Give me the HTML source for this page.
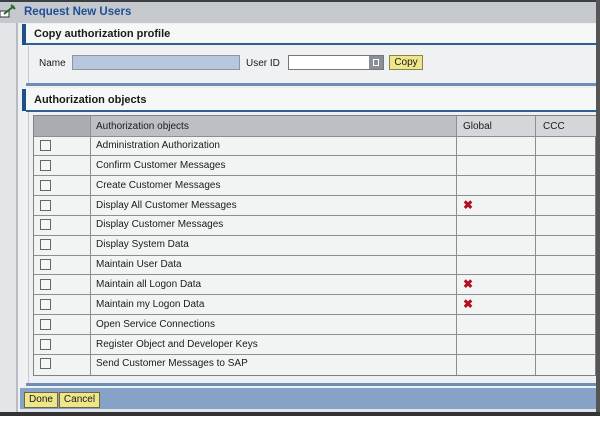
<!DOCTYPE html>
<html><head><style>
*{margin:0;padding:0;box-sizing:border-box}
body{width:600px;height:429px;background:#fff;position:relative;overflow:hidden;font-family:"Liberation Sans",Arial,sans-serif;font-size:10px;color:#1a1a1a}
.a{position:absolute}
.hl{position:absolute;left:91px;font-size:10px}
</style></head><body>
<div class="a" style="left:0;top:0;width:600px;height:416px;background:#eef0f1"></div>
<div class="a" style="left:0;top:0;width:600px;height:2px;background:#3a3f44"></div>
<div class="a" style="left:0;top:2px;width:600px;height:21px;background:#c5c9cd"></div>
<div class="a" style="left:0;top:23px;width:17px;height:390px;background:#e3e6e8"></div>
<div class="a" style="left:16px;top:23px;width:2px;height:390px;background:#b5bcc4"></div>
<div class="a" style="left:596px;top:0;width:4px;height:416px;background:#555"></div>
<div class="a" style="left:0;top:412px;width:600px;height:4px;background:#333"></div>
<svg class="a" style="left:0;top:4px" width="18" height="16"><rect x="0" y="7" width="9" height="6" fill="#fff" stroke="#333"/><path d="M4 10 L14 2" stroke="#2a6a2a" stroke-width="2"/><path d="M11 1 L15 5" stroke="#2a6a2a" stroke-width="2"/></svg>
<div class="a" style="left:24px;top:6px;font-weight:bold;font-size:11.5px;color:#1f4f98">Request New Users</div>
<div class="a" style="left:22px;top:24px;width:574px;height:21px;background:#f6f7f7"></div>
<div class="a" style="left:22px;top:24px;width:4px;height:21px;background:#1e4f88"></div>
<div class="a" style="left:34px;top:28px;font-weight:bold;font-size:11px">Copy authorization profile</div>
<div class="a" style="left:26px;top:43px;width:570px;height:2px;background:#2f5f95"></div>
<div class="a" style="left:28px;top:46px;width:568px;height:37px;background:#f0f1f2;border-left:1px solid #c4cad0"></div>
<div class="a" style="left:39px;top:58px">Name</div>
<div class="a" style="left:72px;top:55px;width:168px;height:15px;background:#b7c8de;border:1px solid #8c97a3"></div>
<div class="a" style="left:246px;top:58px">User ID</div>
<div class="a" style="left:288px;top:55px;width:96px;height:15px;background:#fff;border:1px solid #777"></div>
<div class="a" style="left:369px;top:56px;width:14px;height:13px;background:#8a9098"><div class="a" style="left:4px;top:3px;width:6px;height:7px;border:1px solid #fff"></div></div>
<div class="a" style="left:389px;top:55px;width:34px;height:15px;background:#efe58a;border:1px solid #8a8350;text-align:center;line-height:13px;font-size:10px">Copy</div>
<div class="a" style="left:26px;top:83px;width:570px;height:3px;background:#6d8fb5"></div>
<div class="a" style="left:22px;top:88px;width:574px;height:22px;background:#f6f7f7"></div>
<div class="a" style="left:22px;top:89px;width:4px;height:22px;background:#1e4f88"></div>
<div class="a" style="left:34px;top:94px;font-weight:bold;font-size:11px">Authorization objects</div>
<div class="a" style="left:26px;top:110px;width:570px;height:2px;background:#2f5f95"></div>
<div class="a" style="left:28px;top:112px;width:568px;height:272px;background:#eef0f1;border-left:1px solid #c4cad0"></div>
<div class="a" style="left:33px;top:115px;width:563px;height:261px;background:#f2f3f3;border:1px solid #7d8287"></div>
<div class="a" style="left:34px;top:116px;width:562px;height:20px;background:#a9adb1"></div>
<div class="a" style="left:90px;top:116px;width:367px;height:20px;background:#bcc0c4"></div>
<div class="a" style="left:457px;top:116px;width:139px;height:20px;background:#d4d7da"></div>
<div class="hl" style="top:121px;left:96px">Authorization objects</div>
<div class="a" style="left:463px;top:121px">Global</div>
<div class="a" style="left:543px;top:121px">CCC</div>
<div class="a" style="left:90px;top:116px;width:1px;height:259px;background:#8a8f94"></div>
<div class="a" style="left:456px;top:116px;width:1px;height:259px;background:#8a8f94"></div>
<div class="a" style="left:535px;top:116px;width:1px;height:259px;background:#8a8f94"></div>
<div id="rows"></div>
<script>
var n=["Administration Authorization","Confirm Customer Messages","Create Customer Messages","Display All Customer Messages","Display Customer Messages","Display System Data","Maintain User Data","Maintain all Logon Data","Maintain my Logon Data","Open Service Connections","Register Object and Developer Keys","Send Customer Messages to SAP"];
var x=[3,7,8],h="";
for(var i=0;i<12;i++){var t=136+i*19.85;
h+='<div class="a" style="left:34px;top:'+(t-0.5)+'px;width:562px;height:1px;background:#8a8f94"></div>';
h+='<div class="a" style="left:40px;top:'+(t+4)+'px;width:11px;height:11px;border:1px solid #666;background:#f6f6f6"></div>';
h+='<div class="a" style="left:96px;top:'+(t+4)+'px">'+n[i]+'</div>';
if(x.indexOf(i)>=0)h+='<div class="a" style="left:463px;top:'+(t+2)+'px;color:#b01020;font-size:12px;font-weight:bold">✖</div>';}
document.getElementById('rows').innerHTML=h;
</script>
<div class="a" style="left:26px;top:383px;width:570px;height:3px;background:#6d8fb5"></div>
<div class="a" style="left:20px;top:388px;width:576px;height:22px;background:#86a3c7"></div>
<div class="a" style="left:20px;top:409px;width:576px;height:3px;background:#dfe3e8"></div>
<div class="a" style="left:24px;top:392px;width:34px;height:16px;background:#efe58a;border:1px solid #6d6840;text-align:center;line-height:14px">Done</div>
<div class="a" style="left:59px;top:392px;width:41px;height:16px;background:#efe58a;border:1px solid #6d6840;text-align:center;line-height:14px">Cancel</div>
</body></html>
